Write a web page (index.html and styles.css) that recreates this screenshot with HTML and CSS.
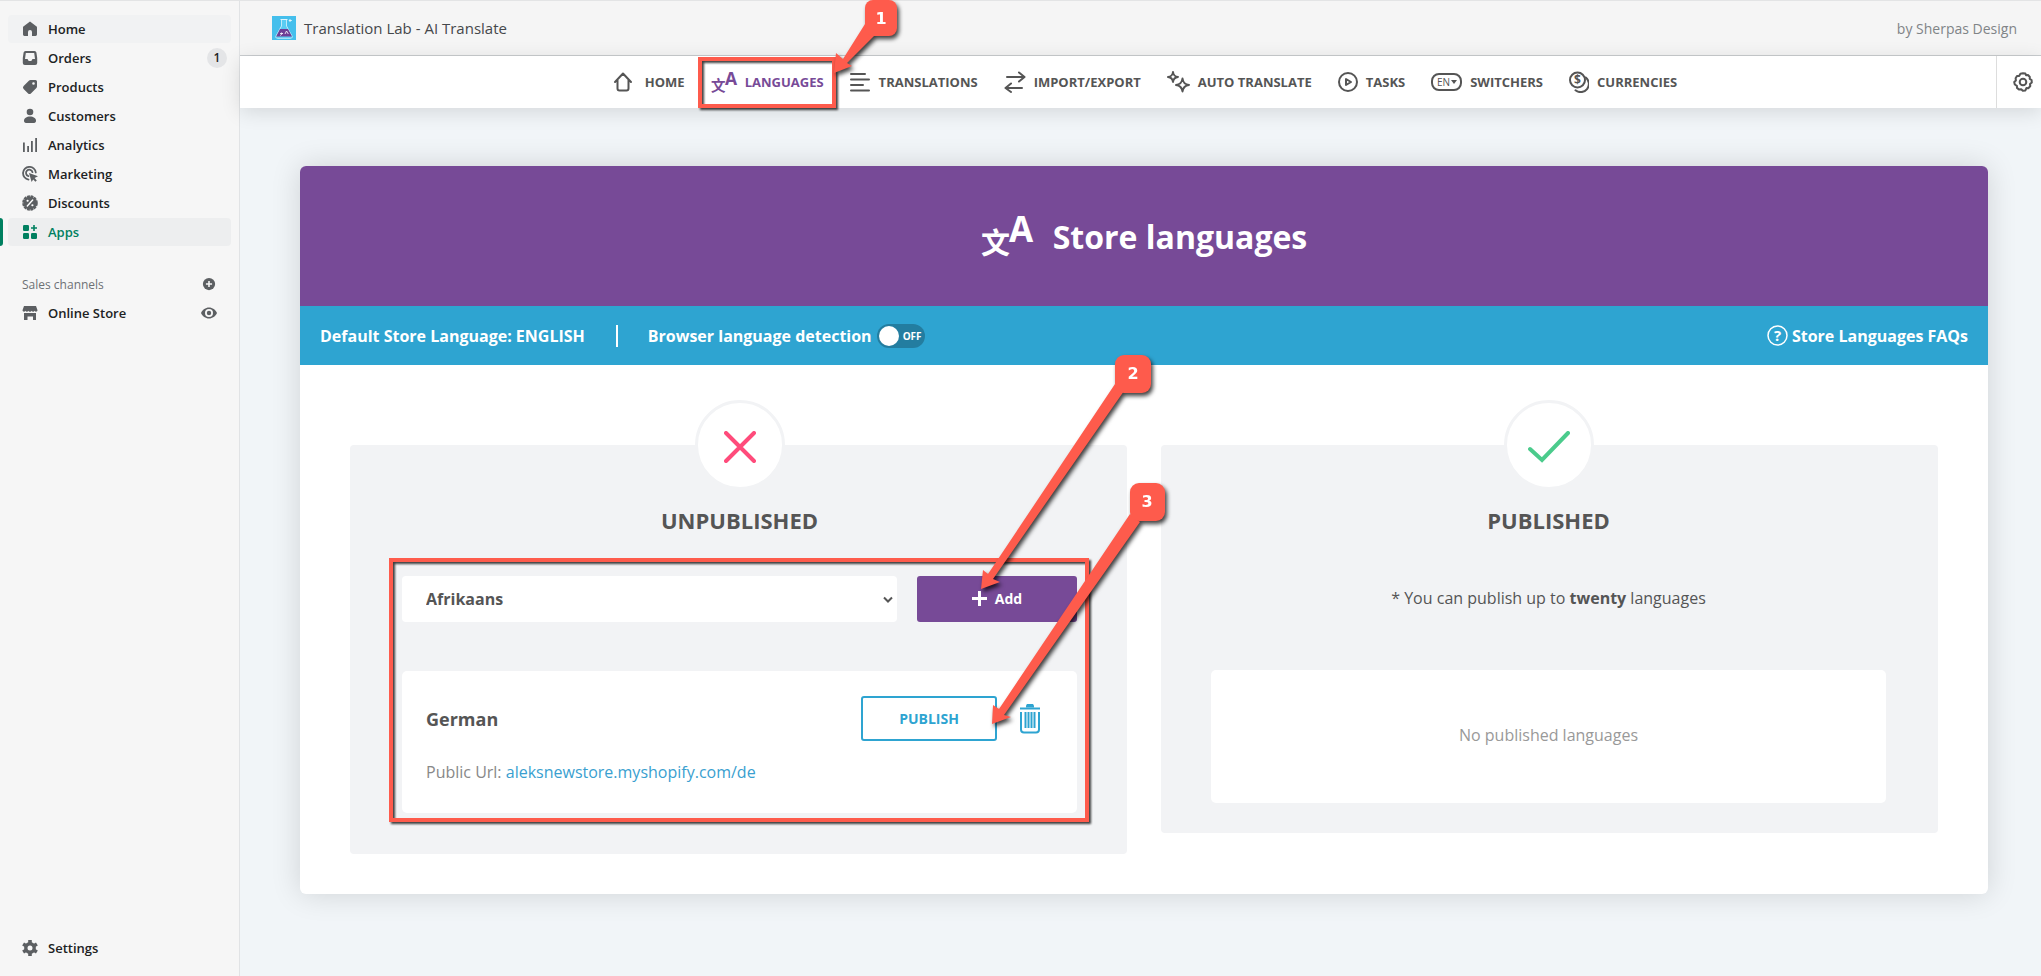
FILE: index.html
```html
<!DOCTYPE html>
<html lang="en">
<head>
    <meta charset="UTF-8">
    <meta name="viewport" content="width=device-width, initial-scale=1.0">
    <title>Translation Lab - AI Translate</title>
    <link rel="stylesheet" href="styles.css">
</head>
<body>
    <!-- Shop admin sidebar -->
    <aside class="sidebar">
        <nav class="side-nav">
            <a href="#" class="side-link hovered">
                <svg viewBox="0 0 16 16"><path d="M8 .6 1.4 5.6A1 1 0 0 0 1 6.4V13.600a1.400 1.400 0 0 0 1.400 1.400H6V11a2 2 0 0 1 4 0v4h3.600A1.400 1.400 0 0 0 15 13.600V6.400a1 1 0 0 0-.4-.8z"/></svg>
                Home
            </a>
            <a href="#" class="side-link">
                <svg viewBox="0 0 16 16"><path fill-rule="evenodd" d="M3.500 1h9A2 2 0 0 1 14.400 2.600L15.200 8v5a2 2 0 0 1-2 2H2.800a2 2 0 0 1-2-2V8l.8-5.400A2 2 0 0 1 3.500 1zM3.800 3 3 9h2.500l1.200 2h2.600l1.200-2H13l-.8-6z"/></svg>
                Orders
                <span class="badge">1</span>
            </a>
            <a href="#" class="side-link">
                <svg viewBox="0 0 16 16"><path fill-rule="evenodd" d="M8.500 1H13.500A1.500 1.500 0 0 1 15 2.500V7.500a2 2 0 0 1-.6 1.400L8.900 14.400a2 2 0 0 1-2.800 0L1.600 9.900a2 2 0 0 1 0-2.800L7.100 1.600A2 2 0 0 1 8.500 1zM11.500 3.200a1.300 1.300 0 1 0 0 2.600 1.300 1.300 0 0 0 0-2.600z"/></svg>
                Products
            </a>
            <a href="#" class="side-link">
                <svg viewBox="0 0 16 16"><circle cx="8" cy="4" r="3.300"/><path d="M8 8.600c-3.400 0-6 1.600-6 4.200 0 1.300.7 2.200 2 2.200h8c1.300 0 2-.9 2-2.200 0-2.600-2.600-4.200-6-4.200z"/></svg>
                Customers
            </a>
            <a href="#" class="side-link">
                <svg viewBox="0 0 16 16"><path d="M1 5.500h1.800V15H1zM5.200 9H7v6H5.200zM9 4h1.800v11H9zM13.200 1H15v14h-1.800z"/></svg>
                Analytics
            </a>
            <a href="#" class="side-link">
                <svg viewBox="0 0 16 16"><g fill="none" stroke="#5c5f62" stroke-width="1.800" stroke-linecap="round"><path d="M6.500 13.600A6.400 6.400 0 1 1 13.800 6.500"/><path d="M6.400 10.200A3.300 3.300 0 1 1 10.500 6.200"/></g><path d="m7 7 9 3.200-3.400 1.800 2.200 2.400-1.400 1.300-2.200-2.300L9.600 16z"/></svg>
                Marketing
            </a>
            <a href="#" class="side-link">
                <svg viewBox="0 0 16 16"><circle cx="8" cy="8" r="6.600" stroke="#5c5f62" stroke-width="2.400" stroke-dasharray="2.800 .7"/><g fill="none" stroke="#fff" stroke-width="1.400" stroke-linecap="round"><path d="M10.700 5 5.300 11"/><path d="M5.500 5.800h.2M10.300 10.200h.2" stroke-width="2"/></g></svg>
                Discounts
            </a>
            <a href="#" class="side-link active">
                <svg viewBox="0 0 16 16"><rect x="1" y="1" width="6" height="6" rx="1.200"/><rect x="1" y="9" width="6" height="6" rx="1.200"/><rect x="9" y="9" width="6" height="6" rx="1.200"/><path d="M11.200 1h1.600v2.200H15v1.600h-2.200V7h-1.600V4.800H9V3.200h2.200z"/></svg>
                Apps
            </a>
        </nav>

        <div class="side-heading">
            Sales channels
            <button type="button" class="side-icon-btn" aria-label="Add channel">
                <svg viewBox="0 0 16 16"><circle cx="8" cy="8" r="7"/><path d="M8 4.500v7M4.500 8h7" stroke="#f6f6f6" stroke-width="1.800"/></svg>
            </button>
        </div>
        <div class="side-link">
            <svg viewBox="0 0 16 16"><path d="M2 1h12l1.500 4.200c0 1.600-2.300 2-2.800.5-.6 1.500-2.600 1.500-3.100 0-.5 1.500-2.700 1.500-3.200 0-.5 1.500-2.500 1.500-3.100 0C2.800 7.200.5 6.800.5 5.200zM2 8h12v7h-3v-3.500H5.500V15H2z"/></svg>
            <a href="#">Online Store</a>
            <button type="button" class="side-icon-btn" aria-label="View store">
                <svg viewBox="0 0 16 16"><path fill-rule="evenodd" d="M8 2.500C4.500 2.500 1.500 4.800 0 8c1.500 3.200 4.500 5.500 8 5.500s6.500-2.300 8-5.500c-1.500-3.200-4.500-5.500-8-5.500zM8 4a4 4 0 1 1 0 8 4 4 0 0 1 0-8z"/><circle cx="8" cy="8" r="2.200"/></svg>
            </button>
        </div>

        <a href="#" class="side-link settings">
            <svg viewBox="0 0 16 16"><circle cx="8" cy="8" r="4.200" fill="none" stroke="#5c5f62" stroke-width="3.400"/><path d="M8 0v3.500M8 12.500V16M1.100 4l3 1.800M11.900 10.200l3 1.800M1.100 12l3-1.800M11.900 5.800l3-1.800" stroke="#5c5f62" stroke-width="3.600"/></svg>
            Settings
        </a>
    </aside>

    <main class="main">
        <header class="app-header">
            <svg class="app-logo" viewBox="0 0 24 24"><rect width="24" height="24" fill="#45bfec"/><path d="M9.500 4v6L4 20a1.500 1.500 0 0 0 1.300 2.300h13.400A1.500 1.500 0 0 0 20 20L14.500 10V4" fill="#5accf3" stroke="#bfeaf9"/><path d="M8.500 3.500h7M18 3v3M16.800 4.500h3" stroke="#dff5fc"/><path d="M8 13h8l4 7.500H4.200z" fill="#6e3f96"/><path d="M8 17.500h3M9.500 16.500v1M8.200 19.500l2.300-2M13 18l1.500-3 1.800 3" fill="none" stroke="#fff" stroke-width=".8"/></svg>
            <span class="app-name">Translation Lab - AI Translate</span>
            <span class="app-author">by Sherpas Design</span>
        </header>

        <div class="top-bar">
            <nav class="tabs">
                <a href="#" class="tab">
                    <svg width="24" height="22" viewBox="0 0 24 22"><path d="M2 11 10 2.500 18 11M4.500 9v8.500q0 2 2 2h7q2 0 2-2V9"/></svg>
                    HOME
                </a>
                <a href="#" class="tab current">
                    <svg class="lang-icon" width="26" height="22" viewBox="0 0 52 44"><text class="lang-cjk" x="0" y="40">文</text><text class="lang-a" x="28" y="28">A</text></svg>
                    LANGUAGES
                    <span class="tab-frame"></span>
                    <svg class="callout callout-one" viewBox="0 0 80 84">
                        <path d="M6 77 8 57 15 63 37 28 46 40 19 67 24 70z"/>
                        <rect x="37" y="4" width="32" height="36" rx="8"/>
                        <text x="53" y="28">1</text>
                    </svg>
                </a>
                <a href="#" class="tab">
                    <svg width="21" height="22" viewBox="0 0 21 22"><path d="M1 3h14M1 8.500h18M1 14h12M1 19.500h18"/></svg>
                    TRANSLATIONS
                </a>
                <a href="#" class="tab">
                    <svg width="22" height="22" viewBox="0 0 22 22"><path d="M3 6h17M15 1.500 20.500 6 15 10.500M18 17H2M7 12.500 1.500 17 7 21"/></svg>
                    IMPORT/EXPORT
                </a>
                <a href="#" class="tab">
                    <svg width="23" height="22" viewBox="0 0 23 22"><path d="M6 1Q6.500 5.500 11 6 6.500 6.500 6 11 5.500 6.500 1 6 5.500 5.500 6 1zM15.500 7.500q.7 5.800 6.500 6.500-5.800.7-6.500 6.500Q14.800 14.700 9 14q5.800-.7 6.500-6.500z"/></svg>
                    AUTO TRANSLATE
                </a>
                <a href="#" class="tab">
                    <svg width="20" height="22" viewBox="0 0 20 22"><circle cx="10" cy="11" r="9"/><path d="M8 8v6l5-3z"/></svg>
                    TASKS
                </a>
                <a href="#" class="tab">
                    <svg width="31" height="22" viewBox="0 0 31 22"><rect x="1" y="3" width="29" height="16" rx="7"/><text class="switch-text" x="6" y="15">EN</text><path class="solid" d="M20 9h6l-3 4z"/></svg>
                    SWITCHERS
                </a>
                <a href="#" class="tab">
                    <svg width="20" height="22" viewBox="0 0 20 22"><circle cx="8.500" cy="9" r="7.500"/><path d="M16.800 6.500A7.800 7.800 0 0 1 6.500 19.300"/><text class="dollar-text" x="5" y="13">$</text></svg>
                    CURRENCIES
                </a>
            </nav>
            <button type="button" class="gear-btn" aria-label="App settings">
                <svg width="20" height="20" viewBox="0 0 20 20"><path d="M10 1.200 12.400 1.500 13 3.300 15 3 16.800 5 16.700 6.900 18.600 8 18.800 10.500 17 12 17.300 14 15.500 16.200 13.500 16 12.400 18.400 9.800 18.800 8.200 17.200 6.200 17.600 4 15.900 3.900 13.800 1.800 12.500 1.200 10 2.900 8.500 2.600 6.200 4 4 6.200 3.900 7.400 1.800z"/><circle cx="10" cy="10" r="3.300"/></svg>
            </button>
        </div>

        <section class="card">
            <div class="card-title">
                <svg class="lang-icon" width="52" height="44" viewBox="0 0 52 44"><text class="lang-cjk" x="0" y="40">文</text><text class="lang-a" x="28" y="28">A</text></svg>
                <h1>Store languages</h1>
            </div>

            <div class="info-bar">
                <span class="default-lang">Default Store Language: ENGLISH</span>
                <label class="detection">
                    Browser language detection
                    <input type="checkbox">
                    <span class="toggle"><span class="knob"></span>OFF</span>
                </label>
                <a href="#" class="faq">
                    <svg width="21" height="21" viewBox="0 0 21 21"><circle cx="10.500" cy="10.500" r="9.500" fill="none" stroke="#fff" stroke-width="1.500"/><text x="10.500" y="16">?</text></svg>
                    Store Languages FAQs
                </a>
            </div>

            <div class="columns">
                <!-- Unpublished languages -->
                <section class="panel">
                    <div class="status">
                        <svg width="32" height="32" viewBox="0 0 32 32"><path d="M2 2l28 28M30 2 2 30" stroke="#ff4b7b"/></svg>
                    </div>
                    <h2>UNPUBLISHED</h2>
                    <div class="highlight">
                        <div class="add-row">
                            <div class="select-wrap">
                                <select aria-label="Language">
                                    <option>Afrikaans</option>
                                </select>
                                <svg width="10" height="8" viewBox="0 0 10 8"><path d="m1 1.500 4 4 4-4"/></svg>
                            </div>
                            <div class="anchor">
                                <button type="button" class="add-btn">
                                    <svg width="15" height="15" viewBox="0 0 15 15"><path d="M7.500 0v15M0 7.500h15"/></svg>
                                    Add
                                </button>
                                <svg class="callout callout-two" viewBox="0 0 185 245">
                                    <path d="M6 239 8 220 13 224 140 34 149 41 18 229 25 232z"/>
                                    <rect x="140" y="5" width="36" height="38" rx="9"/>
                                    <text x="158" y="29">2</text>
                                </svg>
                            </div>
                        </div>
                        <div class="language">
                            <div class="language-top">
                                <h3>German</h3>
                                <div class="anchor">
                                    <button type="button" class="publish-btn">PUBLISH</button>
                                    <svg class="callout callout-three" viewBox="0 0 190 255">
                                        <path d="M7 246 8 227 14 231 145 36 155 44 19 237 26 239z"/>
                                        <rect x="145" y="5" width="35" height="38" rx="9"/>
                                        <text x="162" y="29">3</text>
                                    </svg>
                                </div>
                                <button type="button" class="trash-btn" aria-label="Delete">
                                    <svg width="20" height="30" viewBox="0 0 20 30"><path d="M0 4.500h20" stroke-width="3"/><path d="M7 2.500q0-2 2-2h2q2 0 2 2z" fill="#2ea4d1"/><path d="M1 8v17.500q0 3 3 3h12q3 0 3-3V8M5.500 8v16M8.500 8v16M11.500 8v16M14.500 8v16"/></svg>
                                </button>
                            </div>
                            <p>Public Url: <a href="#">aleksnewstore.myshopify.com/de</a></p>
                        </div>
                    </div>
                </section>

                <!-- Published languages -->
                <section class="panel published">
                    <div class="status">
                        <svg width="42" height="32" viewBox="0 0 42 32"><path d="M2 18 14 29 40 2" stroke="#4bcb8c"/></svg>
                    </div>
                    <h2>PUBLISHED</h2>
                    <p class="limit">* You can publish up to <strong>twenty</strong> languages</p>
                    <div class="empty">No published languages</div>
                </section>
            </div>
        </section>
    </main>
</body>
</html>
```
FILE: styles.css
```css
/* General */
* {
    box-sizing: border-box;
}

body {
    margin: 0;
    min-height: 100vh;
    display: flex;
    font-family: "Open Sans", "Noto Sans", sans-serif;
    font-size: 16px;
    color: #555;
    background-color: #f1f5f8;
}

a {
    color: inherit;
    text-decoration: none;
}

button {
    font-family: inherit;
    cursor: pointer;
}

h1, h2, h3, p {
    margin: 0;
}

svg {
    display: block;
    flex-shrink: 0;
}

/* Sidebar */
.sidebar {
    width: 240px;
    flex-shrink: 0;
    display: flex;
    flex-direction: column;
    padding: 14px 8px;
    background-color: #f6f6f6;
    border-top: 1px solid #e3e4e5;
    border-right: 1px solid #e1e3e5;
    font-size: 13px;
    color: #202223;
}

.side-nav {
    display: flex;
    flex-direction: column;
    gap: 1px;
}

.side-link {
    position: relative;
    display: flex;
    align-items: center;
    gap: 10px;
    height: 28px;
    padding: 0 14px;
    border-radius: 4px;
    font-weight: 600;
}

.side-link svg, .side-heading svg {
    width: 16px;
    height: 16px;
    fill: #5c5f62;
}

.side-link.hovered {
    background-color: #f1f2f3;
}

.side-link.active {
    background-color: #edeeef;
    color: #008060;
}

.side-link.active svg {
    fill: #008060;
}

.side-link.active::before {
    content: "";
    position: absolute;
    left: -8px;
    top: 0;
    width: 3px;
    height: 28px;
    background-color: #008060;
    border-radius: 0 3px 3px 0;
}

.badge {
    width: 20px;
    height: 20px;
    margin-left: auto;
    margin-right: -10px;
    border-radius: 50%;
    background-color: #e4e5e7;
    font-size: 12px;
    line-height: 20px;
    text-align: center;
}

.side-heading {
    display: flex;
    align-items: center;
    height: 28px;
    margin-top: 24px;
    margin-bottom: 1px;
    padding: 0 15px 0 14px;
    font-size: 12px;
    color: #6d7175;
}

.side-icon-btn {
    margin-left: auto;
    padding: 0;
    border: none;
    background: none;
}

.side-heading svg {
    width: 14px;
    height: 14px;
}

.settings {
    margin-top: auto;
}

/* App header */
.main {
    flex: 1;
    min-width: 0;
}

.app-header {
    display: flex;
    align-items: center;
    gap: 8px;
    height: 56px;
    padding: 0 24px 0 32px;
    background-color: #f5f5f5;
    border-top: 1px solid #e3e4e5;
    border-bottom: 1px solid #c9cccf;
}

.app-logo {
    width: 24px;
    height: 24px;
    fill: none;
}

.app-name {
    font-size: 15px;
    color: #45484b;
}

.app-author {
    margin-left: auto;
    font-size: 14px;
    color: #808487;
}

/* Tabs */
.top-bar {
    display: flex;
    height: 52px;
    padding-left: 54px;
    background-color: #fff;
    box-shadow: 0 4px 20px rgba(0, 0, 0, 0.12);
}

.tabs {
    flex: 1;
    display: flex;
    justify-content: center;
    gap: 26px;
}

.tab {
    position: relative;
    display: flex;
    align-items: center;
    gap: 8px;
    font-size: 13px;
    font-weight: 700;
    white-space: nowrap;
}

.tab > svg:first-child, .gear-btn svg {
    fill: none;
    stroke: #555;
    stroke-width: 2;
    stroke-linecap: round;
    stroke-linejoin: round;
}

.tab.current {
    color: #774a97;
}

.tab svg text {
    stroke: none;
    fill: #555;
}

.tab svg .solid {
    stroke: none;
    fill: #555;
}

.tab .switch-text {
    font-size: 10px;
    font-weight: 400;
}

.dollar-text {
    font-size: 12px;
}

.lang-icon {
    overflow: visible;
}

.lang-icon text, .tab .lang-icon text {
    fill: currentColor;
}

.lang-cjk {
    font-family: "Noto Sans CJK SC", sans-serif;
    font-size: 29px;
    font-weight: 700;
}

.lang-a {
    font-size: 35px;
    font-weight: 700;
}

.gear-btn {
    width: 45px;
    display: flex;
    align-items: center;
    justify-content: center;
    padding: 0 0 0 7px;
    border: none;
    border-left: 1px solid #ddd;
    background: none;
}

/* Card */
.card {
    margin: 58px 53px 60px 60px;
    background-color: #fff;
    border-radius: 6px;
    box-shadow: 0 0 30px rgba(0, 0, 0, 0.14);
}

.card-title {
    display: flex;
    align-items: center;
    justify-content: center;
    gap: 20px;
    height: 140px;
    background-color: #774a97;
    border-radius: 6px 6px 0 0;
    color: #fff;
}

.card-title h1 {
    font-size: 32px;
    font-weight: 700;
}

.info-bar {
    display: flex;
    align-items: center;
    height: 59px;
    padding: 0 20px;
    background-color: #2ea4d1;
    color: #fff;
    font-weight: 700;
}

.default-lang {
    padding-right: 31px;
    border-right: 2px solid #fff;
}

.detection {
    display: flex;
    align-items: center;
    gap: 5px;
    margin-left: 30px;
}

.detection input {
    position: absolute;
    opacity: 0;
}

.toggle {
    display: flex;
    align-items: center;
    gap: 4px;
    width: 48px;
    height: 24px;
    padding: 0 2px;
    border-radius: 12px;
    background-color: #237da0;
    font-size: 10px;
}

.knob {
    width: 20px;
    height: 20px;
    border-radius: 50%;
    background-color: #fff;
}

.faq {
    display: flex;
    align-items: center;
    gap: 4px;
    margin-left: auto;
}

.faq text {
    fill: #fff;
    font-size: 15px;
    text-anchor: middle;
}

/* Language columns */
.columns {
    display: grid;
    grid-template-columns: 1fr 1fr;
    align-items: start;
    gap: 34px;
    padding: 80px 50px 40px;
}

.panel {
    padding: 0 50px 41px 52px;
    background-color: #f2f3f5;
    border-radius: 4px;
}

.panel.published {
    padding: 0 52px 30px 50px;
}

.status {
    display: flex;
    align-items: center;
    justify-content: center;
    width: 90px;
    height: 90px;
    margin: -45px auto 0;
    padding-top: 4px;
    border: 3px solid #f2f3f5;
    border-radius: 50%;
    background-color: #fff;
}

.status path {
    fill: none;
    stroke-width: 4;
    stroke-linecap: round;
}

.panel h2 {
    margin: 15px 0 40px;
    font-size: 22px;
    line-height: 31px;
    font-weight: 700;
    text-align: center;
}

.highlight {
    position: relative;
}

/* Red marker frames */
.highlight::after, .tab-frame {
    content: "";
    position: absolute;
    z-index: 2;
    inset: -18px -12px -9px -13px;
    border: 4px solid #fe5b4c;
    filter: drop-shadow(2px 2px 1px rgba(0, 0, 0, 0.75));
    pointer-events: none;
}

.tab-frame {
    inset: 1px -12px 0 -13px;
}

.add-row {
    display: flex;
    gap: 20px;
    margin-bottom: 49px;
}

.select-wrap {
    position: relative;
    flex: 1;
}

.select-wrap select {
    width: 100%;
    height: 46px;
    padding: 0 24px;
    border: none;
    border-radius: 4px;
    background-color: #fff;
    appearance: none;
    font-family: inherit;
    font-size: 16px;
    font-weight: 700;
    color: #555;
}

.select-wrap svg {
    position: absolute;
    right: 4px;
    top: 20px;
    fill: none;
    stroke: #555;
    stroke-width: 2;
    pointer-events: none;
}

.anchor {
    position: relative;
}

.add-btn {
    display: flex;
    align-items: center;
    justify-content: center;
    gap: 8px;
    width: 160px;
    height: 46px;
    padding-bottom: 3px;
    border: none;
    border-radius: 3px;
    background-color: #774a97;
    color: #fff;
    font-size: 14px;
    font-weight: 700;
}

.add-btn path {
    stroke: #fff;
    stroke-width: 3;
}

.language {
    height: 142px;
    padding: 25px 37px 25px 24px;
    border-radius: 5px;
    background-color: #fff;
}

.language-top {
    display: flex;
    align-items: center;
    margin-bottom: 20px;
}

.language h3 {
    margin-right: auto;
    font-size: 18px;
    font-weight: 700;
}

.language p {
    line-height: 22px;
    color: #888;
}

.language p a {
    color: #3a9fd0;
}

.publish-btn {
    display: block;
    width: 136px;
    height: 45px;
    border: 2px solid #2ea4d1;
    border-radius: 3px;
    background-color: #fff;
    color: #2ea4d1;
    font-size: 14px;
    font-weight: 700;
}

.trash-btn {
    margin-left: 23px;
    padding: 0;
    border: none;
    background: none;
}

.trash-btn path {
    fill: none;
    stroke: #2ea4d1;
    stroke-width: 2;
}

.limit {
    margin-bottom: 50px;
    line-height: 44px;
    text-align: center;
}

.empty {
    height: 133px;
    line-height: 131px;
    border-radius: 5px;
    background-color: #fff;
    color: #999;
    text-align: center;
}

/* Numbered callouts */
.callout {
    position: absolute;
    z-index: 3;
    overflow: visible;
    filter: drop-shadow(2px 3px 2px rgba(0, 0, 0, 0.75));
    pointer-events: none;
}

.callout path, .callout rect {
    fill: #fe5b4c;
}

.callout text, .tab .callout text {
    fill: #fff;
    font-family: "DejaVu Sans", sans-serif;
    font-size: 16px;
    font-weight: 700;
    text-anchor: middle;
}

.callout-one {
    left: 117px;
    top: -60px;
    width: 80px;
    height: 84px;
}

.callout-two {
    left: 58px;
    top: -226px;
    width: 185px;
    height: 245px;
}

.callout-three {
    left: 124px;
    top: -218px;
    width: 190px;
    height: 255px;
}
```
